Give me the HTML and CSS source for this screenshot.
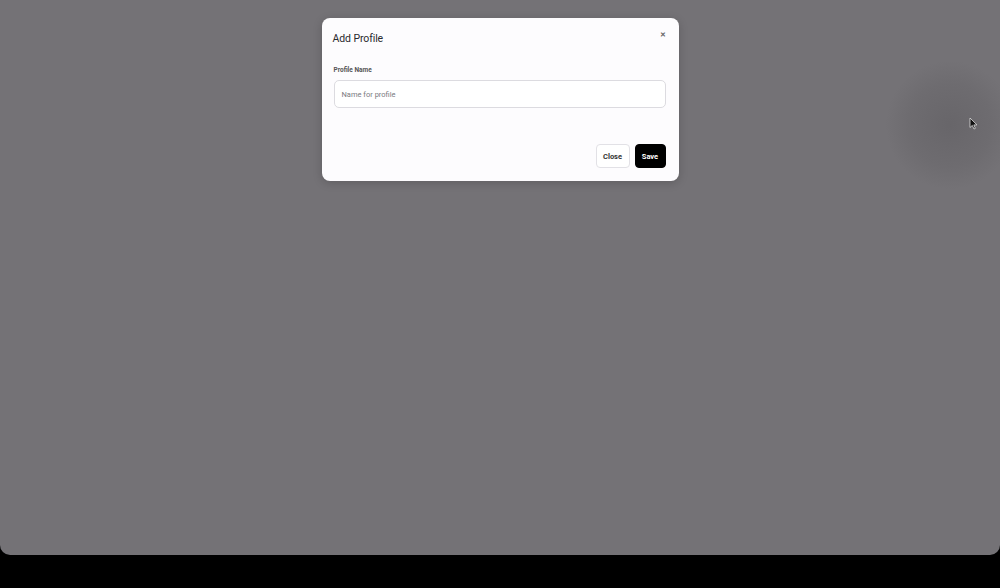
FILE: index.html
```html
<!DOCTYPE html>
<html lang="en">
<head>
<meta charset="utf-8">
<title>Add Profile</title>
<link rel="stylesheet" href="styles.css">
</head>
<body>
<div class="screen">
  <div class="spot"></div>
  <svg class="cursor" width="9" height="13" viewBox="0 0 9 13"><path d="M1 1 L1 10.5 L3.3 8.4 L5 12 L6.4 11.3 L4.8 7.9 L8 7.9 Z" fill="#111" stroke="#ddd" stroke-width="0.8"/></svg>
  <div class="dialog">
    <div class="dialog-head">
      <h2 class="dialog-title">Add Profile</h2>
      <span class="dialog-x">&#x2715;</span>
    </div>
    <label class="field-label">Profile Name</label>
    <div class="field-input">Name for profile</div>
    <div class="dialog-actions">
      <button class="btn btn-light">Close</button>
      <button class="btn btn-dark">Save</button>
    </div>
  </div>
</div>
</body>
</html>
```
FILE: styles.css
```css
html, body {
  margin: 0;
  padding: 0;
  background: #000;
  width: 1000px;
  height: 588px;
  overflow: hidden;
  font-family: "Roboto", "Liberation Sans", sans-serif;
}
.screen {
  position: relative;
  width: 1000px;
  height: 555px;
  background: #747276;
  border-radius: 0 0 10px 10px;
  display: flex;
  justify-content: center;
  align-items: flex-start;
  padding-top: 18px;
  box-sizing: border-box;
}
.spot {
  position: absolute;
  left: 885px;
  top: 60px;
  width: 130px;
  height: 130px;
  border-radius: 50%;
  background: radial-gradient(circle, rgba(85,83,87,0.4) 0%, rgba(85,83,87,0.2) 45%, rgba(85,83,87,0) 70%);
}
.cursor {
  position: absolute;
  left: 969px;
  top: 117px;
}
.dialog {
  width: 357px;
  height: 163px;
  box-sizing: border-box;
  background: #fdfcfe;
  border-radius: 8px;
  box-shadow: 0 2px 10px rgba(0,0,0,0.18);
  padding: 0 13px 0 12px;
  display: flex;
  flex-direction: column;
}
.dialog-head {
  display: flex;
  justify-content: space-between;
  align-items: flex-start;
  height: 48px;
  padding-top: 14px;
  box-sizing: border-box;
}
.dialog-title {
  margin: 0 0 0 -1px;
  font-size: 10.5px;
  font-weight: 400;
  color: #2a2a2e;
  line-height: 14px;
  letter-spacing: -0.1px;
}
.dialog-x {
  font-size: 7px;
  color: #666;
  font-weight: 700;
  margin-top: -1px;
  margin-right: 0px;
}
.field-label {
  font-size: 6.5px;
  font-weight: 700;
  color: #555;
  line-height: 8px;
  margin-bottom: 6px;
}
.field-input {
  height: 28px;
  box-sizing: border-box;
  border: 1px solid #dcdbe0;
  border-radius: 5px;
  padding: 0 7px;
  display: flex;
  align-items: center;
  font-size: 7.5px;
  color: #7a7a80;
  background: #fff;
}
.dialog-actions {
  display: flex;
  justify-content: flex-end;
  gap: 5px;
  margin-top: 36px;
}
.btn {
  height: 24px;
  border-radius: 4px;
  font-family: "Roboto", "Liberation Sans", sans-serif;
  font-size: 7.5px;
  font-weight: 700;
  padding: 0;
  cursor: pointer;
}
.btn-light {
  width: 34px;
  background: #fff;
  border: 1px solid #e2e1e6;
  color: #333;
}
.btn-dark {
  width: 31px;
  background: #000;
  border: 1px solid #000;
  color: #fff;
}
```
